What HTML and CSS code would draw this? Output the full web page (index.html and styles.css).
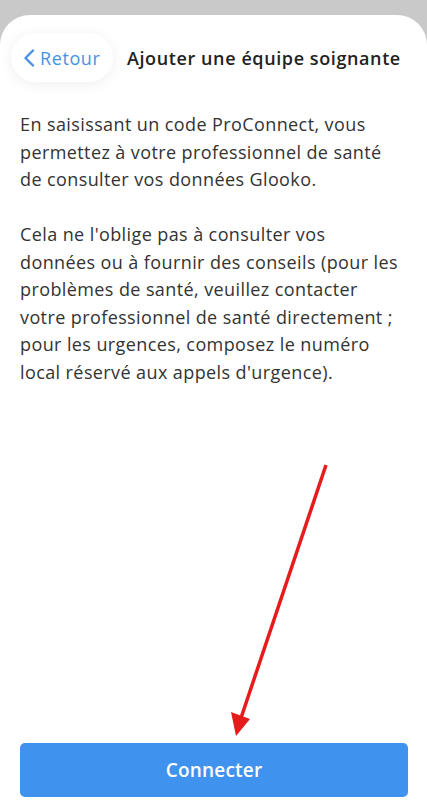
FILE: index.html
```html
<!DOCTYPE html>
<html lang="fr">
<head>
    <meta charset="UTF-8">
    <meta name="viewport" content="width=device-width, initial-scale=1.0">
    <title>Ajouter une équipe soignante</title>
    <link rel="stylesheet" href="styles.css">
</head>
<body>
    <div class="sheet">
        <div class="header">
            <button class="back-btn">
                <svg class="chevron" width="12" height="18" viewBox="0 0 12 18">
                    <path d="M10 1.5 L2.5 9 L10 16.5" fill="none" stroke="#4a90e2" stroke-width="2.4" stroke-linecap="round" stroke-linejoin="round"/>
                </svg>
                Retour
            </button>
            <h1 class="title">Ajouter une équipe soignante</h1>
        </div>

        <div class="content">
            <p>En saisissant un code ProConnect, vous<br>
            permettez à votre professionnel de santé<br>
            de consulter vos données Glooko.</p>
            <p>Cela ne l'oblige pas à consulter vos<br>
            données ou à fournir des conseils (pour les<br>
            problèmes de santé, veuillez contacter<br>
            votre professionnel de santé directement ;<br>
            pour les urgences, composez le numéro<br>
            local réservé aux appels d'urgence).</p>
        </div>

        <button class="connect-btn">Connecter</button>

        <!-- annotation arrow drawn over the page -->
        <svg class="arrow" width="427" height="812" viewBox="0 0 427 812">
            <line x1="326" y1="465" x2="241" y2="718" stroke="#e51c1c" stroke-width="3.5"/>
            <polygon points="236,736 231,712 250,719" fill="#e51c1c"/>
        </svg>
    </div>
</body>
</html>
```

FILE: styles.css
```css
html, body {
    margin: 0;
    height: 100%;
}
body {
    background-color: #c9c9c9;
    font-family: "Open Sans", Lato, sans-serif;
    color: #333;
    padding-top: 15px;
    box-sizing: border-box;
}
.sheet {
    background-color: #fff;
    border-radius: 30px 30px 0 0;
    height: 797px;
    display: flex;
    flex-direction: column;
}
.header {
    display: flex;
    align-items: center;
    padding: 18px 10px 0 11px;
    gap: 14px;
}
.back-btn {
    display: flex;
    align-items: center;
    gap: 5px;
    height: 49px;
    padding: 0 0 0 12px;
    width: 102px;
    border: none;
    border-radius: 25px;
    background-color: #fff;
    box-shadow: 0 2px 14px rgba(0, 0, 0, 0.07);
    color: #4a90e2;
    font-family: inherit;
    font-size: 18px;
    letter-spacing: 0.6px;
}
.title {
    margin: 0;
    font-size: 18px;
    font-weight: 600;
    letter-spacing: 0.6px;
    color: #222;
}
.content {
    padding: 29px 0 0 20px;
    font-size: 18px;
    line-height: 27.5px;
    letter-spacing: 0.4px;
    white-space: nowrap;
}
.content p {
    margin: 0 0 27.5px 0;
}
.connect-btn {
    margin: auto 19px 15px 20px;
    height: 54px;
    border: none;
    border-radius: 5px;
    background-color: #3f92ee;
    color: #fff;
    font-family: inherit;
    font-size: 19px;
    font-weight: 600;
    letter-spacing: 0.2px;
}
.arrow {
    position: absolute;
    top: 0;
    left: 0;
    pointer-events: none;
}
```
